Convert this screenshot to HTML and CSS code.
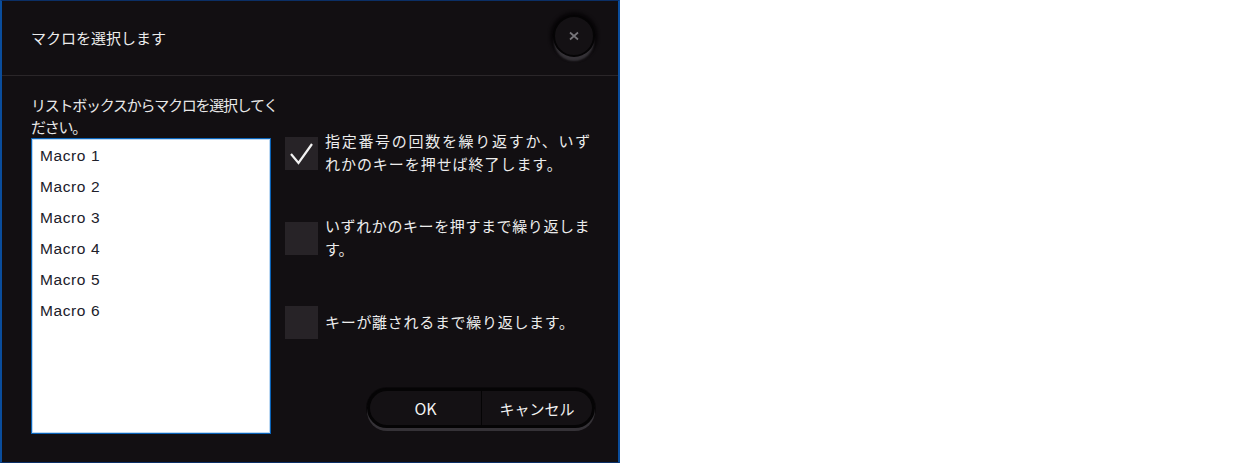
FILE: index.html
```html
<!DOCTYPE html>
<html lang="ja">
<head>
<meta charset="utf-8">
<title>マクロを選択します</title>
<link rel="stylesheet" href="styles.css">
</head>
<body>
<div class="dialog">
  <header class="titlebar">
    <h1 class="title">マクロを選択します</h1>
    <button class="close" type="button">
      <svg viewBox="0 0 10 10" width="10" height="10"><path d="M1 1.5 9 8.5M9 1.5 1 8.5" stroke="#77757a" stroke-width="1.7" fill="none"/></svg>
    </button>
  </header>
  <main class="content">
    <section class="left">
      <p class="prompt">リストボックスからマクロを選択してください。</p>
      <ul class="list">
        <li>Macro 1</li>
        <li>Macro 2</li>
        <li>Macro 3</li>
        <li>Macro 4</li>
        <li>Macro 5</li>
        <li>Macro 6</li>
      </ul>
    </section>
    <section class="right">
      <div class="option first">
        <span class="box">
          <svg viewBox="0 0 33 33" width="33" height="33"><path d="M6 17 13.5 26 27 7" stroke="#f2f2f2" stroke-width="2.2" fill="none"/></svg>
        </span>
        <span class="label"><span class="line wide">指定番号の回数を繰り返すか、いず</span><span class="line mid">れかのキーを押せば終了します。</span></span>
      </div>
      <div class="option second">
        <span class="box"></span>
        <span class="label"><span class="line narrow">いずれかのキーを押すまで繰り返しま</span><span class="line">す。</span></span>
      </div>
      <div class="option third">
        <span class="box"></span>
        <span class="label"><span class="line tight">キーが離されるまで繰り返します。</span></span>
      </div>
      <div class="buttons">
        <div class="pill">
          <button class="btn ok" type="button">OK</button>
          <button class="btn cancel" type="button">キャンセル</button>
        </div>
      </div>
    </section>
  </main>
</div>
</body>
</html>
```

FILE: styles.css
```css
* { box-sizing: border-box; }
html, body { margin: 0; padding: 0; background: #fff; }
body { width: 1240px; height: 463px; overflow: hidden; }

.dialog {
  width: 620px;
  height: 463px;
  background: #120f12;
  border: 1px solid #0b2f66;
  border-left: 2px solid #0a4d9c;
  border-right: 2px solid #0a4d9c;
  color: #f0f0f0;
  font-family: "Noto Sans CJK JP", "Noto Sans", sans-serif;
  display: flex;
  flex-direction: column;
}

.titlebar {
  height: 75px;
  flex: none;
  border-bottom: 1px solid #2a2629;
  display: flex;
  align-items: center;
  justify-content: space-between;
  padding: 0 23px 4px 29px;
}
.title {
  margin: 0;
  font-size: 15px;
  font-weight: 400;
  color: #ececec;
  position: relative;
  top: 1px;
}
.close {
  width: 42px;
  height: 42px;
  padding: 0;
  border-radius: 50%;
  border: 2px solid #050405;
  background: #141114;
  box-shadow: 0 5px 2px -1px #353237, 0 0 3px 3px #080608;
  display: flex;
  align-items: center;
  justify-content: center;
}

.content {
  flex: 1;
  display: flex;
  padding: 18px 0 0 29px;
}

.left { width: 254px; flex: none; display: flex; flex-direction: column; }
.prompt {
  margin: 0;
  width: 250px;
  font-size: 15px;
  line-height: 22px;
  height: 44px;
  letter-spacing: -1.25px;
  color: #e8e8e8;
}
.list {
  list-style: none;
  margin: 0;
  padding: 1px 0 0 8px;
  width: 240px;
  height: 296px;
  background: #fff;
  border: 1px solid #0a63b8;
  box-shadow: inset 0 0 0 1px #bcd8f2;
  color: #20202a;
  font-family: "Liberation Sans", Arial, sans-serif;
  font-size: 15.5px;
  letter-spacing: 0.6px;
}
.list li { height: 31px; line-height: 31px; }

.right { width: 313px; flex: none; display: flex; flex-direction: column; }

.option { display: flex; align-items: center; gap: 7px; height: 56px; }
.option.first { margin-top: 31px; }
.option.second { margin-top: 29px; }
.option.third { margin-top: 28px; }
.box { width: 33px; height: 33px; flex: none; background: #272327; display: block; }
.box svg { display: block; }
.label {
  font-size: 15px;
  line-height: 23px;
  padding-bottom: 2px;
  color: #ececec;
  white-space: nowrap;
}
.line { display: block; }
.line.wide { letter-spacing: 1.7px; }
.line.mid { letter-spacing: 0.95px; }
.line.narrow { letter-spacing: 0.6px; }
.line.tight { letter-spacing: 0.7px; }

.buttons { margin-top: 38px; display: flex; justify-content: flex-end; padding-right: 3px; }
.pill {
  width: 228px;
  height: 40px;
  border-radius: 20px;
  border: 3px solid #050405;
  background: #141114;
  box-shadow: 0 3px 0 0 #353237, 0 0 0 1px #0a080a;
  display: flex;
  overflow: hidden;
}
.btn {
  background: transparent;
  border: 0;
  padding: 0;
  color: #f0f0f0;
  font-family: "Noto Sans CJK JP", "Noto Sans", sans-serif;
  font-size: 15px;
}
.btn.ok { width: 112px; border-right: 1px solid #050405; font-size: 16px; }
.btn.cancel { flex: 1; }
```
